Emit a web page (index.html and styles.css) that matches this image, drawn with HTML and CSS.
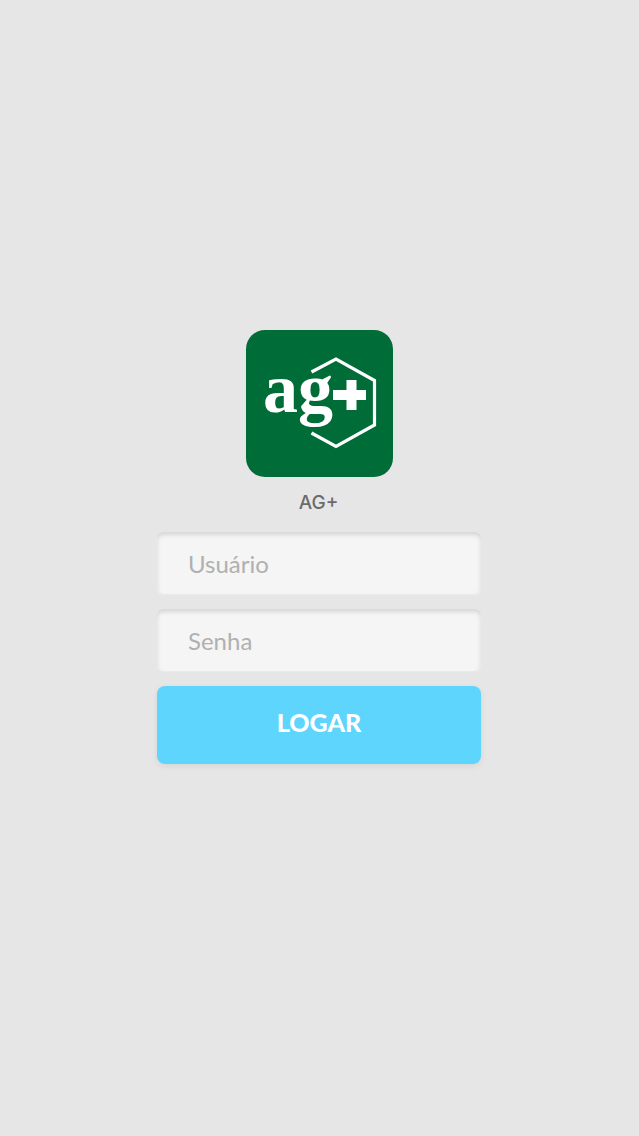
FILE: index.html
```html
<!DOCTYPE html>
<html lang="pt">
<head>
<meta charset="utf-8">
<title>AG+</title>
<link rel="stylesheet" href="styles.css">
</head>
<body>
<main class="login">
  <svg class="logo" viewBox="0 0 147 147" role="img" aria-label="ag+">
    <rect class="logo-bg" width="147" height="147" rx="19"/>
    <polyline class="logo-hex" points="65.5,42 90,29 128.5,50.5 128.5,95 90,116.5 65.5,103"/>
    <text class="logo-text" x="17" y="82" textLength="70" lengthAdjust="spacingAndGlyphs">ag</text>
    <rect class="logo-plus" x="87" y="60" width="33" height="10"/>
    <rect class="logo-plus" x="100.5" y="50" width="10" height="30"/>
  </svg>
  <h1 class="app-name">AG+</h1>
  <form class="form">
    <input class="field" type="text" placeholder="Usuário">
    <input class="field" type="password" placeholder="Senha">
    <button class="submit" type="button">LOGAR</button>
  </form>
</main>
</body>
</html>
```
FILE: styles.css
```css
* { box-sizing: border-box; }
html, body { margin: 0; height: 100%; }
body {
  background: #e6e6e6;
  font-family: Lato, "Liberation Sans", sans-serif;
  overflow: hidden;
}
.login {
  display: flex;
  flex-direction: column;
  align-items: center;
  padding-top: 330px;
}
.logo { display: block; width: 147px; height: 147px; }
.logo-bg { fill: #006d38; }
.logo-hex { fill: none; stroke: #fff; stroke-width: 3.2; }
.logo-text {
  fill: #fff;
  font-family: "Liberation Serif", serif;
  font-weight: 700;
  font-size: 70px;
}
.logo-plus { fill: #fff; }
.app-name {
  margin: 15px 2px 0 0;
  height: 40px;
  font-family: Inter, sans-serif;
  font-size: 19px;
  line-height: 22px;
  font-weight: 500;
  color: #6b6b6b;
}
.form {
  display: flex;
  flex-direction: column;
  gap: 15px;
  width: 324px;
  margin-right: 1px;
}
.field {
  display: block;
  width: 100%;
  height: 62px;
  padding: 0 31px;
  border: 0;
  border-radius: 6px;
  outline: 0;
  background: #f5f5f5;
  box-shadow: inset 0 5px 4px -2px #d6d6d6, inset 4px 0 3px -2px #eaeaea, inset -4px 0 3px -2px #eaeaea, 0 1px 2px #ebebeb;
  font: 400 24px Lato, sans-serif;
  color: #555;
}
.field::placeholder { color: #b0b0b0; opacity: 1; }
.submit {
  display: block;
  width: 100%;
  height: 78px;
  padding: 0 0 6px;
  border: 0;
  border-radius: 8px;
  background: #5dd5fd;
  box-shadow: 0 2px 6px rgba(0, 0, 0, 0.08);
  color: #fff;
  font: 900 25px Lato, sans-serif;
}
```
